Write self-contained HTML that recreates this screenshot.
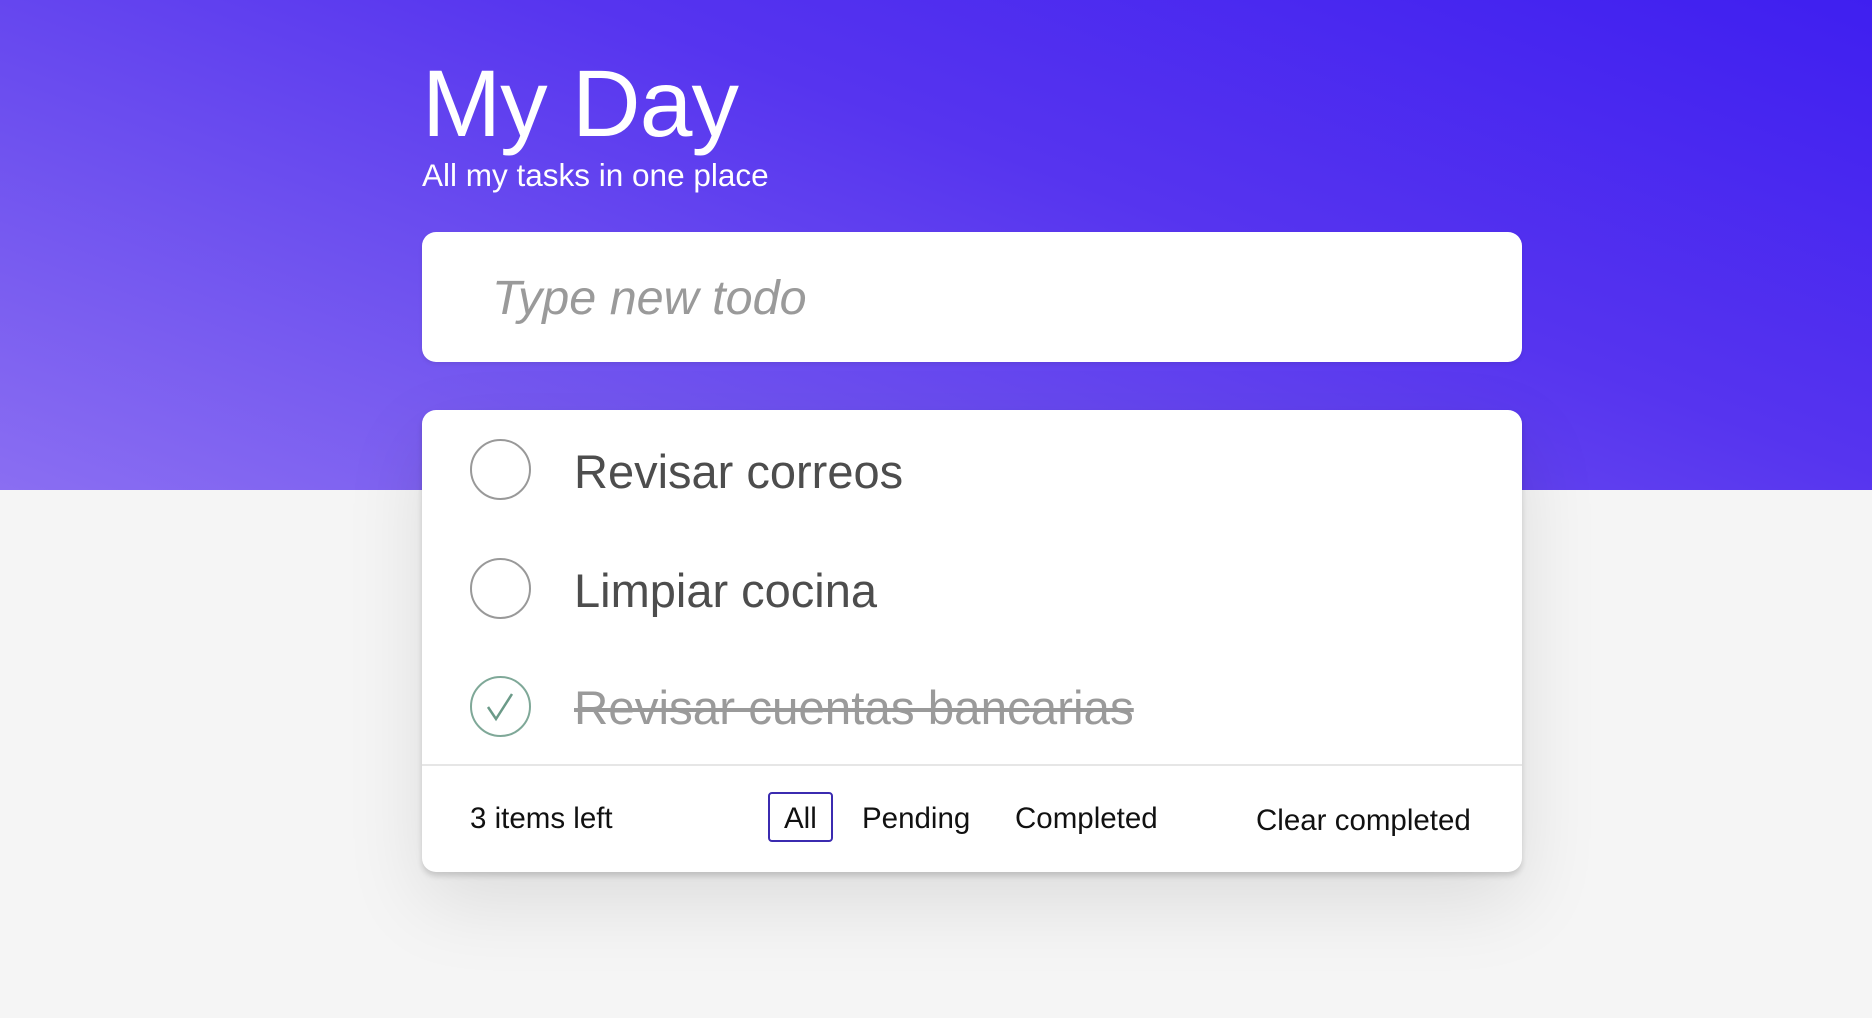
<!DOCTYPE html>
<html><head><meta charset="utf-8"><style>
*{margin:0;padding:0;box-sizing:border-box}
html,body{width:1872px;height:1018px;overflow:hidden;background:#f5f5f5;font-family:"Liberation Sans",Roboto,sans-serif}
.hdr{position:absolute;left:0;top:0;width:1872px;height:490px;background:linear-gradient(20deg,#8a6ef2 0%,#6f52ef 30%,#5634ef 60%,#3f1ff0 100%)}
h1{position:absolute;left:422px;top:49px;font-size:95px;font-weight:400;color:#fff;line-height:110px;letter-spacing:-1px}
.sub{position:absolute;left:422px;top:155px;font-size:31.5px;color:#fff;line-height:40px}
.inp{position:absolute;left:422px;top:232px;width:1100px;height:130px;background:#fff;border-radius:14px;box-shadow:0 2px 4px rgba(0,0,0,.08)}
.inp span{position:absolute;left:70px;top:38px;font-size:48.5px;font-style:italic;color:#9a9a9a;line-height:56px}
.card{position:absolute;left:422px;top:410px;width:1100px;height:462px;background:#fff;border-radius:14px;box-shadow:0 4px 6px rgba(0,0,0,.15),0 30px 80px rgba(0,0,0,.1)}
.row{position:absolute;left:0;width:1100px;height:118px}
.c{position:absolute;left:48px;top:29px;width:61px;height:61px;border:2px solid #999;border-radius:50%}
.t{position:absolute;left:152px;top:33px;font-size:47px;color:#4d4d4d;line-height:58px}
.done .c{border-color:#7fa898}
.done .t{color:#9a9a9a;text-decoration:line-through;text-decoration-thickness:4px;font-size:47.5px}
.div{position:absolute;left:0;top:354px;width:1100px;height:2px;background:#e6e6e6}
.f{position:absolute;top:392px;font-size:29.5px;color:#111;line-height:34px}
.all{position:absolute;left:346px;top:382px;width:65px;height:50px;border:2px solid #3b2bb0;border-radius:4px}
</style></head><body>
<div class="hdr"></div>
<h1>My Day</h1>
<div class="sub">All my tasks in one place</div>
<div class="inp"><span>Type new todo</span></div>
<div class="card">
 <div class="row" style="top:0"><div class="c"></div><div class="t">Revisar correos</div></div>
 <div class="row" style="top:119px"><div class="c"></div><div class="t">Limpiar cocina</div></div>
 <div class="row done" style="top:237px"><div class="c"><svg width="61" height="61" viewBox="0 0 61 61" style="position:absolute;left:-2px;top:-2px"><path d="M18 31 L26 43 L42 18" fill="none" stroke="#6b9a88" stroke-width="2.5"/></svg></div><div class="t">Revisar cuentas bancarias</div></div>
 <div class="div"></div>
 <div class="f" style="left:48px">3 items left</div>
 <div class="all"></div>
 <div class="f" style="left:362px">All</div>
 <div class="f" style="left:440px">Pending</div>
 <div class="f" style="left:593px">Completed</div>
 <div class="f" style="left:834px;top:394px">Clear completed</div>
</div>
</body></html>
